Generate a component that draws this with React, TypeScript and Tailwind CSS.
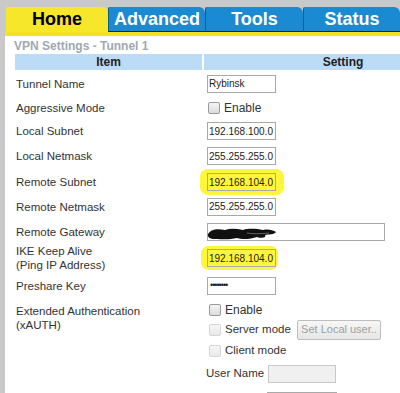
import React from "react";

const Input = ({ value, w = 69, yellow = false, disabled = false, small = false }: { value?: string; w?: number; yellow?: boolean; disabled?: boolean; small?: boolean }) => (
  <div
    className={`h-[18px] border flex items-center pl-[1px] text-[#222] whitespace-nowrap overflow-hidden ${
      disabled ? "bg-[#f0f0f0] border-[#c8c8c8]" : yellow ? "bg-transparent border-[#a9a9a9]" : "bg-white border-[#a9a9a9]"
    } ${small ? "text-[9px] tracking-[-1px] pl-[2px]" : "text-[10px]"}`}
    style={{ width: w }}
  >
    {value}
  </div>
);

const Check = ({ disabled = false }: { disabled?: boolean }) => (
  <div
    className={`w-[12px] h-[12px] shrink-0 rounded-[2px] border ${
      disabled ? "border-[#d6d6d6] bg-gradient-to-b from-[#f6f6f6] to-[#e9e9e9]" : "border-[#9a9a9a] bg-gradient-to-b from-[#f4f4f4] to-[#dcdcdc]"
    }`}
  />
);

const Row = ({ h, label, children }: { h: number; label: React.ReactNode; children?: React.ReactNode }) => (
  <div className="flex items-center" style={{ height: h }}>
    <div className="w-[192px] pl-[1px] text-[11.5px] leading-[14px] text-[#333]">{label}</div>
    <div className="flex items-center">{children}</div>
  </div>
);

const Tab = ({ label, active, w }: { label: string; active?: boolean; w: number }) => (
  <div
    className={`h-full flex items-center justify-center rounded-tr-[6px] rounded-tl-[2px] text-[18px] font-bold ${
      active ? "bg-[#f6e72a] text-black" : "bg-[#1a8bd2] text-white border-l border-[#0d5d8f] border-b border-b-[#222]"
    }`}
    style={{ width: w, fontFamily: "Arial, 'Liberation Sans', sans-serif" }}
  >
    {label}
  </div>
);

export default function App() {
  return (
    <div
      className="w-[400px] h-[393px] overflow-hidden bg-white"
      style={{ fontFamily: "'Liberation Sans', Arial, sans-serif" }}
    >
      <div className="bg-[#c9c9c9] pt-[7px] pl-[6px]">
        <div className="flex h-[25px]">
          <Tab label="Home" active w={102} />
          <Tab label="Advanced" w={97} />
          <Tab label="Tools" w={98} />
          <Tab label="Status" w={97} />
        </div>
      </div>
      <div className="h-[4px] bg-[#f4e322] flex">
        <div className="w-[5px] bg-[#c9c9c9]" />
      </div>
      <div className="flex h-[361px]">
        <div className="w-[5px] bg-[#c9c9c9]" />
        <div className="flex-1 pl-[10px]">
          <div className="h-[18px] pt-[3px] -ml-[1px] text-[12px] font-bold leading-[14px] text-[#9ea8b2]">
            VPN Settings - Tunnel 1
          </div>
          <div className="flex h-[16px] text-[12px] leading-[16px] text-[#222] font-bold">
            <div className="w-[187px] bg-[#bcdbf7] text-center">Item</div>
            <div className="w-[2px]" />
            <div className="flex-1 bg-[#bcdbf7] text-center pl-[82px]">Setting</div>
          </div>
          <div className="h-[1px]" />
          <Row h={25} label="Tunnel Name">
            <Input value="Rybinsk" />
          </Row>
          <Row h={23} label="Aggressive Mode">
            <div className="flex items-center gap-[4px] pl-[1px]">
              <Check />
              <span className="text-[12px] text-[#333]">Enable</span>
            </div>
          </Row>
          <Row h={24} label="Local Subnet">
            <Input value="192.168.100.0" />
          </Row>
          <Row h={26} label="Local Netmask">
            <Input value="255.255.255.0" />
          </Row>
          <Row h={26} label="Remote Subnet">
            <div className="-ml-[7px] -my-[4px] pl-[7px] pr-[8px] py-[4px] bg-[#fff53a] rounded-[8px]">
              <Input value="192.168.104.0" yellow />
            </div>
          </Row>
          <Row h={23} label="Remote Netmask">
            <Input value="255.255.255.0" />
          </Row>
          <Row h={27} label="Remote Gateway">
            <div className="relative">
              <Input w={178} />
              <svg className="absolute left-[0px] top-[2px]" width="70" height="16" viewBox="0 0 70 16">
                <path
                  d="M1 9 C5 3 12 4 18 5 C24 3 30 4 36 5 C42 3 50 4 56 5 C61 4 66 5 69 7 C67 10 62 9 58 10 C60 12 55 14 50 12 C44 14 36 15 30 13 C22 15 14 14 8 14 C3 14 0 12 1 9 Z"
                  fill="#111"
                />
                <path d="M40 8 C46 9 52 9 62 8" stroke="#666" strokeWidth="1" fill="none" />
              </svg>
            </div>
          </Row>
          <Row
            h={26}
            label={
              <>
                IKE Keep Alive
                <br />
                (Ping IP Address)
              </>
            }
          >
            <div className="-ml-[6px] -my-[3px] pl-[6px] pr-[2px] py-[3px] bg-[#fff53a] rounded-[8px]">
              <Input value="192.168.104.0" yellow />
            </div>
          </Row>
          <Row h={30} label="Preshare Key">
            <Input value="••••••••" small />
          </Row>
          <div className="flex">
            <div className="w-[192px] pl-[1px] pt-[3px] text-[11.5px] leading-[14px] text-[#333]">
              Extended Authentication
              <br />
              (xAUTH)
            </div>
            <div className="flex flex-col">
              <div className="h-[18px] flex items-center gap-[4px] pl-[2px]">
                <Check />
                <span className="text-[12px] text-[#333]">Enable</span>
              </div>
              <div className="h-[21px] flex items-center pl-[2px]">
                <Check disabled />
                <span className="ml-[4px] w-[72px] whitespace-nowrap text-[11.5px] text-[#333]">Server mode</span>
                <div className="h-[20px] w-[84px] border border-[#bdbdbd] rounded-[2px] bg-gradient-to-b from-[#f7f7f7] to-[#e6e6e6] flex items-center justify-center text-[11px] text-[#a0a0a0]">
                  Set Local user..
                </div>
              </div>
              <div className="h-[21px] flex items-center gap-[4px] pl-[2px]">
                <Check disabled />
                <span className="text-[11.5px] text-[#333]">Client mode</span>
              </div>
              <div className="h-[25px] flex items-center -ml-[1px]">
                <span className="w-[62px] whitespace-nowrap text-[11.5px] text-[#333]">User Name</span>
                <Input disabled w={68} />
              </div>
              <div className="h-[10px] flex items-end pl-[60px]">
                <div className="w-[70px] h-[4px] border border-b-0 border-[#a9a9a9] bg-[#f0f0f0]" />
              </div>
            </div>
          </div>
        </div>
      </div>
    </div>
  );
}
